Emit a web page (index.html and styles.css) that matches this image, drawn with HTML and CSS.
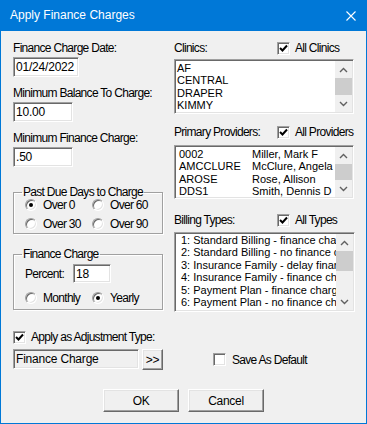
FILE: index.html
```html
<!DOCTYPE html>
<html lang="en">
<head>
  <meta charset="UTF-8" />
  <title>Apply Finance Charges</title>
  <link rel="stylesheet" href="styles.css">
</head>
<body>
  <div class="window">
    <div class="titlebar">
      <span class="title">Apply Finance Charges</span>
      <svg class="close" width="10" height="10" viewBox="0 0 10 10"><path d="M0.5 0.5 L9.5 9.5 M9.5 0.5 L0.5 9.5" stroke="#fff" stroke-width="1.1" fill="none"/></svg>
    </div>

    <div class="content">
      <div class="columns">
        <div class="col-left">
          <div class="field">
            <label class="label" for="chargeDate">Finance Charge Date:</label>
            <input id="chargeDate" class="textbox w-date" type="text" value="01/24/2022">
          </div>
          <div class="field">
            <label class="label" for="minBalance">Minimum Balance To Charge:</label>
            <input id="minBalance" class="textbox w-num" type="text" value="10.00">
          </div>
          <div class="field">
            <label class="label" for="minCharge">Minimum Finance Charge:</label>
            <input id="minCharge" class="textbox w-num" type="text" value=".50">
          </div>

          <fieldset class="group group-days">
            <legend>Past Due Days to Charge</legend>
            <div class="radio-grid">
              <div class="radio"><span class="dot on"></span>Over 0</div>
              <div class="radio"><span class="dot"></span>Over 60</div>
              <div class="radio"><span class="dot"></span>Over 30</div>
              <div class="radio"><span class="dot"></span>Over 90</div>
            </div>
          </fieldset>

          <fieldset class="group group-charge">
            <legend>Finance Charge</legend>
            <div class="percent-row">
              <label class="percent-label" for="percent">Percent:</label>
              <input id="percent" class="textbox w-pct" type="text" value="18">
            </div>
            <div class="radio-grid">
              <div class="radio"><span class="dot"></span>Monthly</div>
              <div class="radio"><span class="dot on"></span>Yearly</div>
            </div>
          </fieldset>

          <div class="check apply-check">
            <span class="box"><svg width="9" height="9" viewBox="0 0 9 9"><path d="M1 4 L3.5 6.5 L8 1.5" stroke="#000" stroke-width="2" fill="none"/></svg></span>
            Apply as Adjustment Type:
          </div>
        </div>

        <div class="col-right">
          <div class="list-head">
            <span>Clinics:</span>
            <div class="check">
              <span class="box"><svg width="9" height="9" viewBox="0 0 9 9"><path d="M1 4 L3.5 6.5 L8 1.5" stroke="#000" stroke-width="2" fill="none"/></svg></span>
              All Clinics
            </div>
          </div>
          <div class="listbox lb-clinics">
            <div class="items">
              <div class="item">AF</div>
              <div class="item">CENTRAL</div>
              <div class="item">DRAPER</div>
              <div class="item">KIMMY</div>
            </div>
            <div class="vscroll">
              <div class="sb-btn"><svg width="9" height="6" viewBox="0 0 9 6"><path d="M1 5 L4.5 1.5 L8 5" stroke="#606060" stroke-width="1.4" fill="none"/></svg></div>
              <div class="sb-thumb"></div>
              <div class="sb-btn"><svg width="9" height="6" viewBox="0 0 9 6"><path d="M1 1 L4.5 4.5 L8 1" stroke="#606060" stroke-width="1.4" fill="none"/></svg></div>
            </div>
          </div>

          <div class="list-head head-providers">
            <span>Primary Providers:</span>
            <div class="check">
              <span class="box"><svg width="9" height="9" viewBox="0 0 9 9"><path d="M1 4 L3.5 6.5 L8 1.5" stroke="#000" stroke-width="2" fill="none"/></svg></span>
              All Providers
            </div>
          </div>
          <div class="listbox lb-providers">
            <div class="items">
              <div class="item prov"><span>0002</span><span>Miller, Mark F</span></div>
              <div class="item prov"><span>AMCCLURE</span><span>McClure, Angela</span></div>
              <div class="item prov"><span>AROSE</span><span>Rose, Allison</span></div>
              <div class="item prov"><span>DDS1</span><span>Smith, Dennis D</span></div>
            </div>
            <div class="vscroll">
              <div class="sb-btn"><svg width="9" height="6" viewBox="0 0 9 6"><path d="M1 5 L4.5 1.5 L8 5" stroke="#606060" stroke-width="1.4" fill="none"/></svg></div>
              <div class="sb-thumb"></div>
              <div class="sb-btn"><svg width="9" height="6" viewBox="0 0 9 6"><path d="M1 1 L4.5 4.5 L8 1" stroke="#606060" stroke-width="1.4" fill="none"/></svg></div>
            </div>
          </div>

          <div class="list-head head-billing">
            <span>Billing Types:</span>
            <div class="check">
              <span class="box"><svg width="9" height="9" viewBox="0 0 9 9"><path d="M1 4 L3.5 6.5 L8 1.5" stroke="#000" stroke-width="2" fill="none"/></svg></span>
              All Types
            </div>
          </div>
          <div class="listbox lb-billing">
            <div class="items">
              <div class="item">1: Standard Billing - finance charge</div>
              <div class="item">2: Standard Billing - no finance charge</div>
              <div class="item">3: Insurance Family - delay finance charge</div>
              <div class="item">4: Insurance Family - finance charge</div>
              <div class="item">5: Payment Plan - finance charge</div>
              <div class="item">6: Payment Plan - no finance charge</div>
            </div>
            <div class="vscroll">
              <div class="sb-btn"><svg width="9" height="6" viewBox="0 0 9 6"><path d="M1 5 L4.5 1.5 L8 5" stroke="#606060" stroke-width="1.4" fill="none"/></svg></div>
              <div class="sb-thumb thumb-billing"></div>
              <div class="sb-track"></div>
              <div class="sb-btn"><svg width="9" height="6" viewBox="0 0 9 6"><path d="M1 1 L4.5 4.5 L8 1" stroke="#606060" stroke-width="1.4" fill="none"/></svg></div>
            </div>
          </div>
        </div>
      </div>

      <div class="adj-row">
        <div class="adj-pick">
          <input class="textbox disabled w-adj" type="text" value="Finance Charge" disabled>
          <button class="btn btn-more" type="button">&gt;&gt;</button>
        </div>
        <div class="check save-check">
          <span class="box"></span>
          Save As Default
        </div>
      </div>

      <div class="buttons">
        <button class="btn btn-main" type="button">OK</button>
        <button class="btn btn-main" type="button">Cancel</button>
      </div>
    </div>
  </div>
</body>
</html>
```

FILE: styles.css
```css
html, body {
  margin: 0;
  padding: 0;
}
body {
  width: 367px;
  height: 424px;
  font-family: 'Liberation Sans', Arial, sans-serif;
  font-size: 12px;
  letter-spacing: -0.7px;
  color: #000;
  background: #f0f0f0;
}
.window {
  box-sizing: border-box;
  width: 367px;
  height: 424px;
  border: 1px solid #0078d7;
  border-top: 0;
  background: #f0f0f0;
}
.titlebar {
  height: 31px;
  margin: 0 -1px;
  padding: 0 11px 0 10px;
  background: #0078d7;
  color: #fff;
  display: flex;
  align-items: center;
  justify-content: space-between;
}
.title {
  line-height: 31px;
  letter-spacing: 0;
}
.content {
  padding: 10px 12px 0 12px;
}
.columns {
  display: flex;
  gap: 11px;
}
.col-left {
  width: 150px;
}
.col-right {
  width: 180px;
}

/* left fields */
.field {
  margin-bottom: 9px;
}
.label {
  display: block;
  height: 14px;
  line-height: 14px;
  margin-bottom: 2px;
}
.textbox {
  display: block;
  box-sizing: border-box;
  height: 20px;
  margin: 0;
  padding: 0 2px;
  font-family: 'Liberation Sans', Arial, sans-serif;
  font-size: 12px;
  letter-spacing: -0.2px;
  color: #000;
  background: #fff;
  border: 1px solid;
  border-color: #a0a0a0 #fff #fff #a0a0a0;
  box-shadow: inset 1px 1px 0 #696969, inset -1px -1px 0 #e3e3e3;
  outline: none;
}
.w-date { width: 66px; }
.w-num { width: 60px; }
.w-pct { width: 38px; height: 19px; }
.w-adj { width: 126px; }
.textbox.disabled {
  background: #f0f0f0;
  color: #000;
  -webkit-text-fill-color: #000;
  opacity: 1;
}

/* group boxes */
.group {
  margin: 0;
  padding: 0 0 0 11px;
  border: 1px solid #a0a0a0;
  box-shadow: inset 1px 1px 0 #fff, 1px 1px 0 #fff;
  min-width: 0;
}
.group legend {
  padding: 0 1px;
  margin-left: -3px;
  line-height: 14px;
}
.group-days {
  margin-top: 18px;
}
.group-days .radio-grid {
  margin-top: -4px;
}
.group-charge {
  margin-top: 13px;
  padding-bottom: 2px;
}
.radio-grid {
  display: grid;
  grid-template-columns: 67px 1fr;
}
.radio {
  display: flex;
  align-items: center;
  gap: 6px;
  height: 19px;
}
.dot {
  box-sizing: border-box;
  width: 12px;
  height: 12px;
  border-radius: 50%;
  border: 1px solid;
  border-color: #a0a0a0 #fff #fff #a0a0a0;
  box-shadow: inset 1px 1px 0 #696969, inset -1px -1px 0 #e3e3e3;
  background: #fff;
  display: flex;
  align-items: center;
  justify-content: center;
}
.dot.on::after {
  content: '';
  width: 4px;
  height: 4px;
  border-radius: 50%;
  background: #000;
}
.percent-row {
  display: flex;
  align-items: center;
  margin-top: 3px;
  height: 19px;
}
.percent-label {
  width: 48px;
}
.group-charge .radio-grid {
  margin-top: 5px;
}

/* checkboxes */
.check {
  display: flex;
  align-items: center;
  gap: 5px;
}
.box {
  box-sizing: border-box;
  width: 13px;
  height: 13px;
  border: 1px solid;
  border-color: #a0a0a0 #fff #fff #a0a0a0;
  box-shadow: inset 1px 1px 0 #696969, inset -1px -1px 0 #e3e3e3;
  background: #fff;
  display: flex;
  align-items: center;
  justify-content: center;
}
.apply-check {
  margin-top: 20px;
  height: 14px;
}

/* right column lists */
.list-head {
  display: grid;
  grid-template-columns: 103px 1fr;
  align-items: center;
  height: 14px;
  line-height: 14px;
}
.head-providers {
  margin-top: 11px;
}
.head-billing {
  margin-top: 14px;
}
.listbox {
  box-sizing: border-box;
  display: flex;
  margin-top: 4px;
  border: 1px solid;
  border-color: #a0a0a0 #fff #fff #a0a0a0;
  box-shadow: inset 1px 1px 0 #696969, inset -1px -1px 0 #e3e3e3;
  background: #fff;
  padding: 1px;
  font-size: 11px;
  letter-spacing: 0;
}
.lb-clinics { height: 55px; }
.lb-providers { height: 54px; margin-top: 6px; }
.lb-billing { height: 80px; width: 181px; margin-top: 5px; }
.items {
  flex: 1;
  min-width: 0;
  overflow: hidden;
  padding: 1px 0 0 1px;
}
.item {
  line-height: 12.4px;
  white-space: nowrap;
}
.lb-providers .items { padding-left: 3px; }
.lb-billing .items { padding-left: 5px; padding-top: 0; }
.prov {
  display: grid;
  grid-template-columns: 73px 1fr;
}
.vscroll {
  width: 17px;
  display: flex;
  flex-direction: column;
  background: #f0f0f0;
}
.sb-btn {
  height: 17px;
  flex: none;
  display: flex;
  align-items: center;
  justify-content: center;
}
.sb-thumb {
  flex: 1;
  background: #cdcdcd;
}
.thumb-billing {
  flex: none;
  height: 20px;
}
.sb-track {
  flex: 1;
}

/* bottom rows */
.adj-row {
  display: flex;
  align-items: center;
  margin-top: 5px;
  height: 21px;
}
.adj-pick {
  display: flex;
  gap: 3px;
  width: 150px;
}
.adj-pick .textbox {
  height: 20px;
}
.save-check {
  margin-left: 50px;
  gap: 6px;
}
.btn {
  box-sizing: border-box;
  margin: 0;
  padding: 0;
  font-family: 'Liberation Sans', Arial, sans-serif;
  font-size: 12px;
  letter-spacing: -0.3px;
  color: #000;
  background: #f0f0f0;
  border: 1px solid;
  border-color: #fff #696969 #696969 #fff;
  box-shadow: inset -1px -1px 0 #a0a0a0, inset 1px 1px 0 #e3e3e3;
}
.btn-more {
  width: 21px;
  height: 21px;
}
.buttons {
  display: flex;
  justify-content: center;
  gap: 9px;
  margin-top: 19px;
}
.btn-main {
  width: 76px;
  height: 23px;
}
```
